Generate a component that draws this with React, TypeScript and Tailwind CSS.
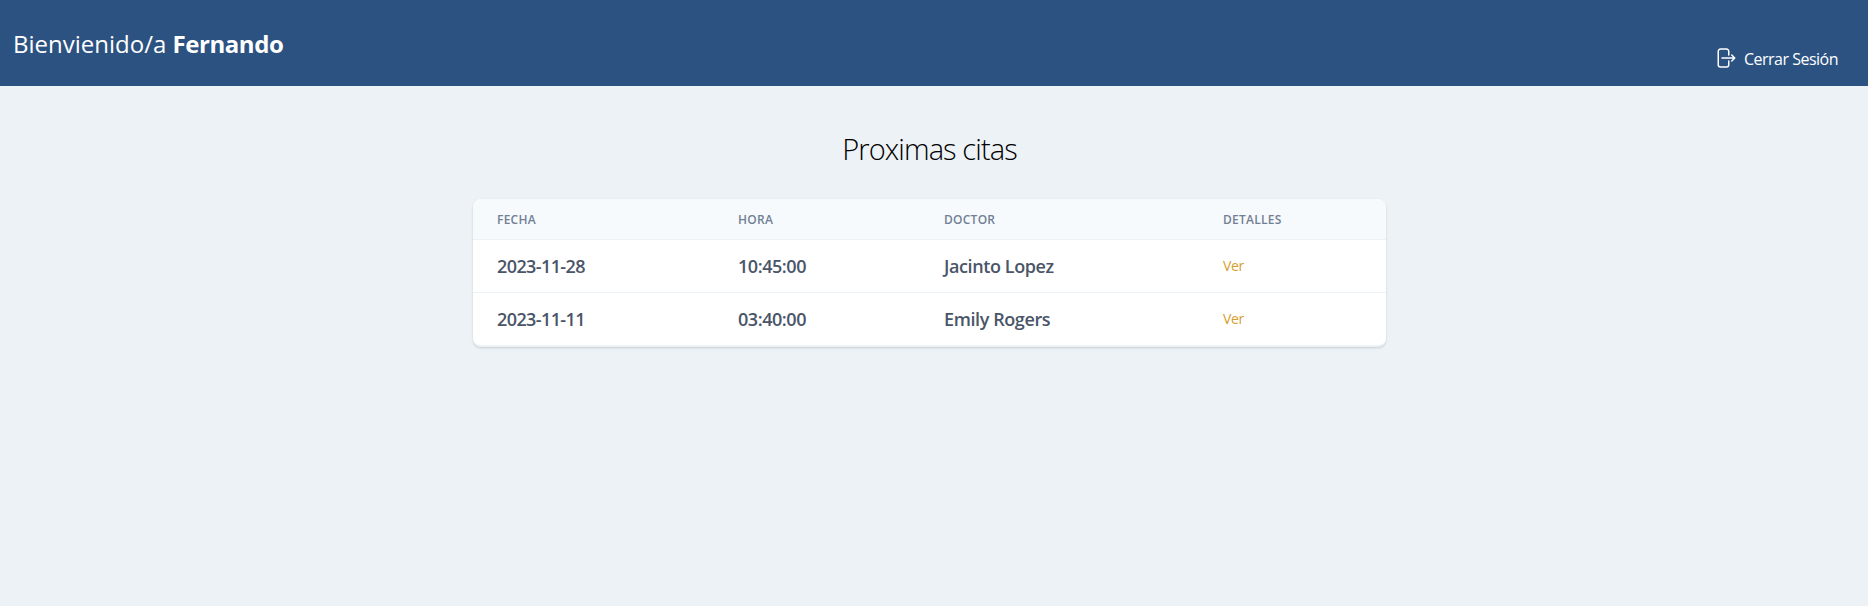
const citas = [
  { fecha: "2023-11-28", hora: "10:45:00", doctor: "Jacinto Lopez" },
  { fecha: "2023-11-11", hora: "03:40:00", doctor: "Emily Rogers" },
];

function LogoutIcon() {
  return (
    <svg className="h-6 w-6" fill="none" viewBox="0 0 24 24" strokeWidth={1.5} stroke="currentColor">
      <path
        strokeLinecap="round"
        strokeLinejoin="round"
        d="M15.75 9V5.25A2.25 2.25 0 0013.5 3h-6a2.25 2.25 0 00-2.25 2.25v13.5A2.25 2.25 0 007.5 21h6a2.25 2.25 0 002.25-2.25V15m3 0l3-3m0 0l-3-3m3 3H9"
      />
    </svg>
  );
}

export default function App() {
  return (
    <div className="min-h-screen bg-[#edf2f7] font-['Open_Sans','Noto_Sans',sans-serif] text-black">
      <header className="flex h-[86px] items-start justify-between bg-[#2c5282] pl-[13px] pr-[30px] text-white">
        <h1 className="mt-[26px] text-2xl leading-9 whitespace-nowrap">
          Bienvienido/a <span className="font-bold tracking-[-0.45px]">Fernando</span>
        </h1>
        <button className="mt-[46px] flex items-start gap-[7px] text-base leading-6 whitespace-nowrap">
          <LogoutIcon />
          <span className="pt-px tracking-[-0.5px]">Cerrar Sesión</span>
        </button>
      </header>
      <main className="flex flex-col items-center pr-[9px]">
        <h2 className="mt-[40px] text-[29px] leading-[45px] font-light tracking-[-0.9px] whitespace-nowrap">Proximas citas</h2>
        <div className="mt-[28px] w-[913px] overflow-hidden rounded-lg border-b-2 border-[#edf2f7] bg-white shadow-[0_1px_3px_0_rgba(0,0,0,0.1),0_1px_2px_0_rgba(0,0,0,0.06)]">
          <table className="w-full table-fixed text-left">
            <colgroup>
              <col className="w-[241px]" />
              <col className="w-[206px]" />
              <col className="w-[279px]" />
              <col />
            </colgroup>
            <thead>
              <tr className="h-[40px] border-b border-[#edf2f7] bg-[#f7fafc] text-xs tracking-[0.25px] text-[#718096]">
                <th className="pt-0.5 pl-6 font-semibold">FECHA</th>
                <th className="pt-0.5 pl-6 font-semibold">HORA</th>
                <th className="pt-0.5 pl-6 font-semibold">DOCTOR</th>
                <th className="pt-0.5 pl-6 font-semibold">DETALLES</th>
              </tr>
            </thead>
            <tbody className="divide-y divide-[#edf2f7]">
              {citas.map((c) => (
                <tr key={c.fecha} className="h-[53px] text-lg font-semibold text-[#4a5568]">
                  <td className="pl-6 tracking-[-0.6px]">{c.fecha}</td>
                  <td className="pl-6 tracking-[-0.45px]">{c.hora}</td>
                  <td className="pl-6 tracking-[-0.4px]">{c.doctor}</td>
                  <td className="pl-6 text-sm font-normal tracking-[-0.3px] text-[#d69e2e]">
                    <a href="#">Ver</a>
                  </td>
                </tr>
              ))}
            </tbody>
          </table>
        </div>
      </main>
    </div>
  );
}
